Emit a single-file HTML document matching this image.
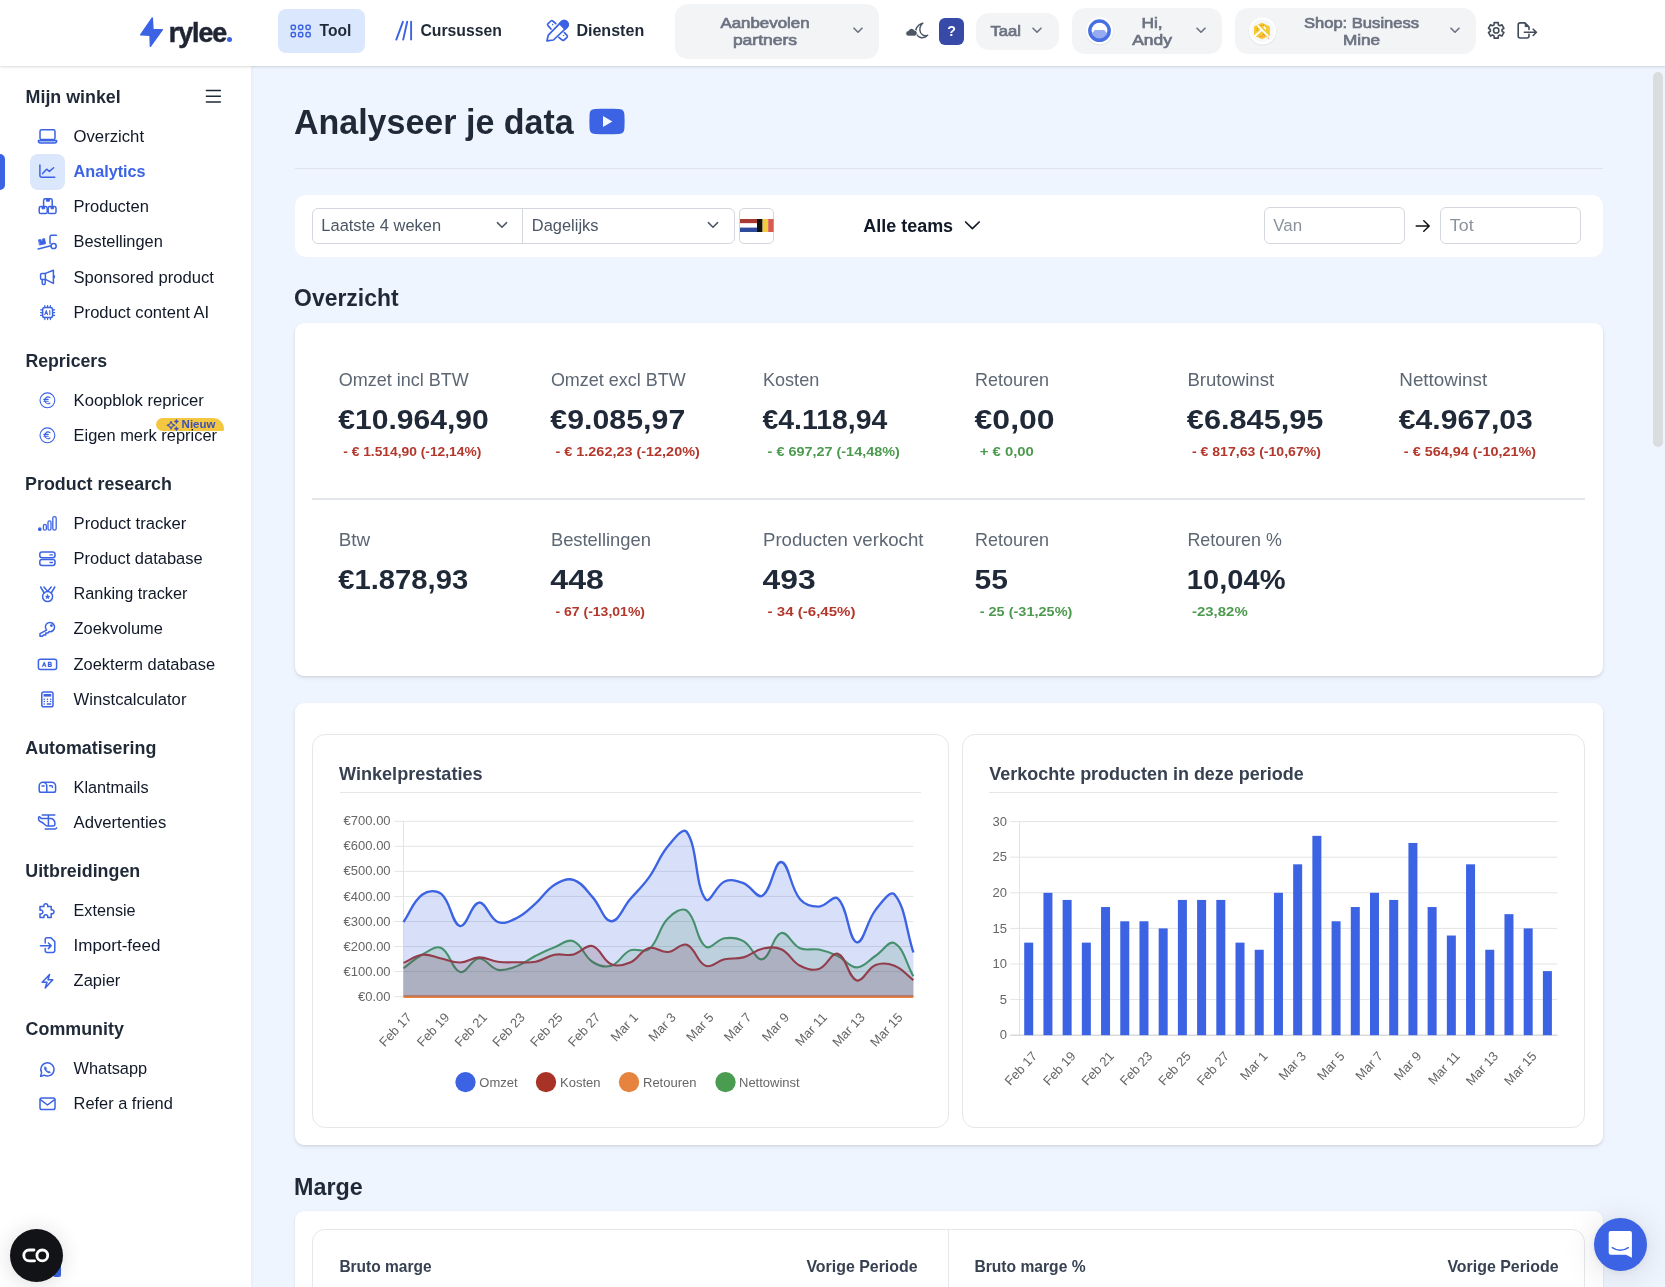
<!DOCTYPE html>
<html lang="nl"><head><meta charset="utf-8"><title>Rylee - Analytics</title>
<style>
*{box-sizing:border-box;margin:0;padding:0}
html,body{width:1665px;height:1287px;overflow:hidden;background:#eff5fe;font-family:"Liberation Sans",sans-serif}
#app{position:relative;width:1665px;height:1287px;overflow:hidden}
.t{position:absolute;white-space:pre;line-height:1;transform-origin:0 50%;font-family:"Liberation Sans",sans-serif}
.abs{position:absolute}
.box{position:absolute;background:#fff}
svg{position:absolute;overflow:visible}
.ic{fill:none;stroke:#3b63e3;stroke-width:1.5;stroke-linecap:round;stroke-linejoin:round}

</style></head>
<body>
<div id="app">
<!-- scrollbar -->
<div class="abs" style="left:1653px;top:72px;width:10px;height:375px;background:#dadde0;border-radius:5px"></div>
<!-- video icon -->
<svg style="left:585px;top:105px" width="44" height="34" viewBox="585 105 44 34"><path d="M595 109 C603 108.600 611 108.600 619 109 C622.600 109.200 624.200 110.800 624.400 114.400 C624.700 119 624.700 124 624.400 128.600 C624.200 132.200 622.600 133.800 619 134 C611 134.400 603 134.400 595 134 C591.400 133.800 589.800 132.200 589.600 128.600 C589.300 124 589.300 119 589.600 114.400 C589.800 110.800 591.400 109.200 595 109 Z" fill="#3b63e3"/><path d="M603 116 L612.400 121.500 L603 127.100 Z" fill="#f4f7ff"/></svg>
<!-- divider -->
<div class="abs" style="left:295px;top:168px;width:1308px;height:1px;background:#dfe4ec"></div>
<!-- filter bar -->
<div class="box" style="left:295px;top:195px;width:1308px;height:61.5px;border-radius:11px"></div>
<div class="abs" style="left:312px;top:207.5px;width:423px;height:36.5px;border:1px solid #d4d7dd;border-radius:6px;background:#fff"></div>
<div class="abs" style="left:522px;top:207.5px;width:1px;height:36.5px;background:#d4d7dd"></div>
<svg style="left:496px;top:221px" width="12" height="9" viewBox="0 0 12 9"><path d="M1.4 1.6 L6 6.2 L10.6 1.6" fill="none" stroke="#4b5563" stroke-width="1.5" stroke-linecap="round" stroke-linejoin="round"/></svg>
<svg style="left:707px;top:221px" width="12" height="9" viewBox="0 0 12 9"><path d="M1.4 1.6 L6 6.2 L10.6 1.6" fill="none" stroke="#4b5563" stroke-width="1.5" stroke-linecap="round" stroke-linejoin="round"/></svg>
<!-- flag button -->
<div class="abs" style="left:739px;top:208px;width:35px;height:35.5px;border:1px solid #d4d7dd;border-radius:5px;background:#fff"></div>
<svg style="left:740px;top:219px" width="34" height="13" viewBox="0 0 34 13">
<rect x="0" y="0" width="17" height="4.4" fill="#a93a32"/><rect x="0" y="4.4" width="17" height="4.3" fill="#fff"/><rect x="0" y="8.6" width="17" height="4.4" fill="#2d4a9b"/>
<rect x="17" y="0" width="5.6" height="13" fill="#111"/><rect x="22.6" y="0" width="5.6" height="13" fill="#f2cc3c"/><rect x="28.2" y="0" width="5.4" height="13" fill="#d95a4e"/></svg>
<!-- alle teams chevron -->
<svg style="left:964px;top:220px" width="17" height="11" viewBox="0 0 17 11"><path d="M1.6 2 L8.4 8.6 L15.2 2" fill="none" stroke="#111827" stroke-width="1.7" stroke-linecap="round" stroke-linejoin="round"/></svg>
<!-- date inputs -->
<div class="abs" style="left:1264px;top:207px;width:141px;height:37px;border:1px solid #d4d7dd;border-radius:6px;background:#fff"></div>
<div class="abs" style="left:1440px;top:207px;width:141px;height:37px;border:1px solid #d4d7dd;border-radius:6px;background:#fff"></div>
<svg style="left:1415px;top:219px" width="16" height="14" viewBox="0 0 16 14"><path d="M1.2 7 H14 M8.8 1.8 L14.2 7 L8.8 12.2" fill="none" stroke="#111" stroke-width="1.5" stroke-linecap="round" stroke-linejoin="round"/></svg>
<!-- overview card -->
<div class="box" style="left:295px;top:323px;width:1308px;height:353.3px;border-radius:9px;box-shadow:0 2px 4px rgba(0,0,0,.08),0 1px 2px rgba(0,0,0,.07)"></div>
<div class="abs" style="left:312px;top:498px;width:1273px;height:2px;background:#e2e5ea"></div>
<!-- charts card -->
<div class="box" style="left:295px;top:702.7px;width:1308px;height:442.6px;border-radius:9px;box-shadow:0 2px 4px rgba(0,0,0,.08),0 1px 2px rgba(0,0,0,.07)"></div>
<div class="abs" style="left:312px;top:734px;width:637px;height:393.5px;border:1px solid #e5e7eb;border-radius:13px;background:#fff"></div>
<div class="abs" style="left:962px;top:734px;width:623px;height:393.5px;border:1px solid #e5e7eb;border-radius:13px;background:#fff"></div>
<div class="abs" style="left:340px;top:791.5px;width:581px;height:1px;background:#e5e7eb"></div>
<div class="abs" style="left:989px;top:791.5px;width:569px;height:1px;background:#e5e7eb"></div>
<!-- marge card -->
<div class="box" style="left:295px;top:1211.4px;width:1308px;height:90px;border-radius:9px;box-shadow:0 1px 3px rgba(0,0,0,.10)"></div>
<div class="abs" style="left:312px;top:1229px;width:1273px;height:80px;border:1px solid #e5e7eb;border-radius:13px;background:#fff"></div>
<div class="abs" style="left:948px;top:1229px;width:1px;height:80px;background:#e5e7eb"></div>
<!-- chat button -->
<div class="abs" style="left:1594px;top:1218px;width:53px;height:53px;border-radius:50%;background:#3b63e3;box-shadow:0 4px 34px rgba(0,0,0,.13),0 1px 6px rgba(0,0,0,.06)"></div>
<svg style="left:1600px;top:1224px" width="40" height="40" viewBox="1600 1224 40 40"><path d="M1610.700 1231.100 H1629.900 a2 2 0 0 1 2 2 V1257.800 L1626 1254.800 H1610.700 a2 2 0 0 1 -2 -2 V1233.100 a2 2 0 0 1 2 -2 Z" fill="#fff"/><path d="M1612.300 1247.700 Q1620.200 1253 1628.300 1247.700" fill="none" stroke="#3b63e3" stroke-width="1.500" stroke-linecap="round"/></svg>

<svg style="left:0;top:0;will-change:transform" width="1665" height="1287" viewBox="0 0 1665 1287" font-family="Liberation Sans, sans-serif">
<path d="M394.3 996.60 H913.4" stroke="#e4e4e4" stroke-width="1" fill="none"/>
<text x="390.6" y="1000.70" font-size="13" fill="#666666" text-anchor="end">€0.00</text>
<path d="M394.3 971.56 H913.4" stroke="#e4e4e4" stroke-width="1" fill="none"/>
<text x="390.6" y="975.66" font-size="13" fill="#666666" text-anchor="end">€100.00</text>
<path d="M394.3 946.51 H913.4" stroke="#e4e4e4" stroke-width="1" fill="none"/>
<text x="390.6" y="950.61" font-size="13" fill="#666666" text-anchor="end">€200.00</text>
<path d="M394.3 921.47 H913.4" stroke="#e4e4e4" stroke-width="1" fill="none"/>
<text x="390.6" y="925.57" font-size="13" fill="#666666" text-anchor="end">€300.00</text>
<path d="M394.3 896.43 H913.4" stroke="#e4e4e4" stroke-width="1" fill="none"/>
<text x="390.6" y="900.53" font-size="13" fill="#666666" text-anchor="end">€400.00</text>
<path d="M394.3 871.39 H913.4" stroke="#e4e4e4" stroke-width="1" fill="none"/>
<text x="390.6" y="875.49" font-size="13" fill="#666666" text-anchor="end">€500.00</text>
<path d="M394.3 846.34 H913.4" stroke="#e4e4e4" stroke-width="1" fill="none"/>
<text x="390.6" y="850.44" font-size="13" fill="#666666" text-anchor="end">€600.00</text>
<path d="M394.3 821.30 H913.4" stroke="#e4e4e4" stroke-width="1" fill="none"/>
<text x="390.6" y="825.40" font-size="13" fill="#666666" text-anchor="end">€700.00</text>
<path d="M403.5 821.3 V996.6" stroke="#e4e4e4" stroke-width="1" fill="none"/>
<path d="M403.50 968.23 C411.05 962.72 414.24 958.82 422.39 954.45 C429.34 950.72 435.30 945.20 441.27 947.97 C450.41 952.20 451.57 969.57 460.16 971.96 C466.68 973.78 471.29 958.94 479.04 958.51 C486.40 958.09 489.86 968.23 497.93 969.86 C504.97 971.28 509.68 968.79 516.81 966.13 C524.79 963.15 528.00 959.62 535.70 955.75 C543.11 952.03 546.85 950.14 554.58 947.16 C561.96 944.30 567.20 938.73 573.47 941.16 C582.31 944.57 583.42 955.92 592.35 961.75 C598.53 965.78 604.56 967.81 611.24 965.80 C619.67 963.27 621.62 954.12 630.12 950.40 C636.72 947.51 643.82 953.65 649.01 949.26 C658.92 940.88 658.24 928.32 667.89 918.45 C673.35 912.88 681.73 906.90 686.78 910.67 C696.83 918.18 695.65 939.36 705.66 946.67 C710.76 950.39 716.70 939.38 724.55 938.24 C731.80 937.18 737.06 937.60 743.43 941.16 C752.17 946.03 755.56 960.77 762.32 959.32 C770.67 957.52 772.57 935.57 781.20 933.05 C787.68 931.16 791.60 944.57 800.09 948.29 C806.71 951.19 811.62 948.07 818.97 949.59 C826.73 951.19 830.68 952.68 837.86 956.07 C845.78 959.82 849.22 967.49 856.74 967.42 C864.33 967.36 868.16 960.56 875.63 955.75 C883.27 950.83 888.88 940.03 894.51 943.10 C903.99 948.27 905.85 963.05 913.40 976.34 L913.40 996.60 L403.50 996.60 Z" fill="#4a9c50" fill-opacity="0.2" stroke="none"/>
<path d="M403.50 968.23 C411.05 962.72 414.24 958.82 422.39 954.45 C429.34 950.72 435.30 945.20 441.27 947.97 C450.41 952.20 451.57 969.57 460.16 971.96 C466.68 973.78 471.29 958.94 479.04 958.51 C486.40 958.09 489.86 968.23 497.93 969.86 C504.97 971.28 509.68 968.79 516.81 966.13 C524.79 963.15 528.00 959.62 535.70 955.75 C543.11 952.03 546.85 950.14 554.58 947.16 C561.96 944.30 567.20 938.73 573.47 941.16 C582.31 944.57 583.42 955.92 592.35 961.75 C598.53 965.78 604.56 967.81 611.24 965.80 C619.67 963.27 621.62 954.12 630.12 950.40 C636.72 947.51 643.82 953.65 649.01 949.26 C658.92 940.88 658.24 928.32 667.89 918.45 C673.35 912.88 681.73 906.90 686.78 910.67 C696.83 918.18 695.65 939.36 705.66 946.67 C710.76 950.39 716.70 939.38 724.55 938.24 C731.80 937.18 737.06 937.60 743.43 941.16 C752.17 946.03 755.56 960.77 762.32 959.32 C770.67 957.52 772.57 935.57 781.20 933.05 C787.68 931.16 791.60 944.57 800.09 948.29 C806.71 951.19 811.62 948.07 818.97 949.59 C826.73 951.19 830.68 952.68 837.86 956.07 C845.78 959.82 849.22 967.49 856.74 967.42 C864.33 967.36 868.16 960.56 875.63 955.75 C883.27 950.83 888.88 940.03 894.51 943.10 C903.99 948.27 905.85 963.05 913.40 976.34" fill="none" stroke="#4a9c50" stroke-width="2.1" stroke-linejoin="round" stroke-linecap="butt"/>
<path d="M403.5 996.6 H913.4" stroke="#e6833f" stroke-width="2.8" fill="none"/>
<path d="M403.50 962.88 C411.05 959.64 414.58 955.68 422.39 954.78 C429.69 953.93 433.73 956.95 441.27 958.51 C448.84 960.07 452.65 962.79 460.16 962.56 C467.76 962.33 471.45 957.53 479.04 957.37 C486.56 957.21 490.27 960.76 497.93 961.75 C505.38 962.71 509.26 962.24 516.81 962.24 C524.37 962.24 528.38 963.19 535.70 961.75 C543.49 960.21 546.79 956.28 554.58 954.78 C561.89 953.36 566.26 956.12 573.47 954.45 C581.36 952.62 585.69 944.30 592.35 946.02 C600.80 948.19 602.47 960.34 611.24 964.18 C617.58 966.96 623.43 965.43 630.12 962.56 C638.54 958.94 640.66 950.30 649.01 947.97 C655.77 946.08 660.52 952.65 667.89 952.02 C675.62 951.36 680.48 942.42 686.78 944.72 C695.59 947.94 696.80 962.38 705.66 965.80 C711.91 968.22 716.80 961.05 724.55 959.32 C731.91 957.67 736.21 959.39 743.43 957.37 C751.32 955.17 754.41 950.47 762.32 948.78 C769.52 947.23 774.72 946.34 781.20 949.26 C789.82 953.15 791.52 961.31 800.09 965.80 C806.63 969.23 812.32 971.19 818.97 969.05 C827.43 966.32 831.41 951.70 837.86 953.64 C846.52 956.24 848.08 977.79 856.74 980.40 C863.19 982.33 867.12 968.28 875.63 964.99 C882.23 962.44 887.81 963.12 894.51 965.80 C902.91 969.16 905.85 974.36 913.40 980.07 L913.40 996.60 L403.50 996.60 Z" fill="#712327" fill-opacity="0.2" stroke="none"/>
<path d="M403.50 962.88 C411.05 959.64 414.58 955.68 422.39 954.78 C429.69 953.93 433.73 956.95 441.27 958.51 C448.84 960.07 452.65 962.79 460.16 962.56 C467.76 962.33 471.45 957.53 479.04 957.37 C486.56 957.21 490.27 960.76 497.93 961.75 C505.38 962.71 509.26 962.24 516.81 962.24 C524.37 962.24 528.38 963.19 535.70 961.75 C543.49 960.21 546.79 956.28 554.58 954.78 C561.89 953.36 566.26 956.12 573.47 954.45 C581.36 952.62 585.69 944.30 592.35 946.02 C600.80 948.19 602.47 960.34 611.24 964.18 C617.58 966.96 623.43 965.43 630.12 962.56 C638.54 958.94 640.66 950.30 649.01 947.97 C655.77 946.08 660.52 952.65 667.89 952.02 C675.62 951.36 680.48 942.42 686.78 944.72 C695.59 947.94 696.80 962.38 705.66 965.80 C711.91 968.22 716.80 961.05 724.55 959.32 C731.91 957.67 736.21 959.39 743.43 957.37 C751.32 955.17 754.41 950.47 762.32 948.78 C769.52 947.23 774.72 946.34 781.20 949.26 C789.82 953.15 791.52 961.31 800.09 965.80 C806.63 969.23 812.32 971.19 818.97 969.05 C827.43 966.32 831.41 951.70 837.86 953.64 C846.52 956.24 848.08 977.79 856.74 980.40 C863.19 982.33 867.12 968.28 875.63 964.99 C882.23 962.44 887.81 963.12 894.51 965.80 C902.91 969.16 905.85 974.36 913.40 980.07" fill="none" stroke="#a93226" stroke-width="2.1" stroke-linejoin="round" stroke-linecap="butt"/>
<path d="M403.50 922.02 C411.05 910.99 412.73 901.62 422.39 894.46 C427.84 890.40 436.19 889.71 441.27 893.97 C451.29 902.36 451.81 924.18 460.16 926.08 C466.91 927.61 471.09 903.42 479.04 902.56 C486.19 901.80 489.10 918.42 497.93 922.02 C504.21 924.58 510.05 921.30 516.81 917.97 C525.16 913.84 528.54 909.67 535.70 903.37 C543.65 896.37 545.87 890.15 554.58 884.73 C560.98 880.74 566.91 877.75 573.47 879.86 C582.02 882.61 585.52 889.41 592.35 896.89 C600.63 905.95 603.44 920.71 611.24 921.21 C618.55 921.68 622.57 908.08 630.12 899.32 C637.68 890.56 642.32 886.82 649.01 877.43 C657.43 865.61 658.74 857.30 667.89 846.30 C673.84 839.14 682.96 826.66 686.78 832.03 C698.06 847.87 694.65 884.90 705.66 899.32 C709.76 904.68 715.81 885.23 724.55 881.48 C730.92 878.75 736.56 880.51 743.43 883.10 C751.67 886.22 756.72 898.87 762.32 895.75 C771.83 890.44 773.95 861.34 781.20 862.02 C789.05 862.77 789.91 887.30 800.09 899.32 C805.02 905.14 811.48 906.78 818.97 906.62 C826.58 906.45 833.31 894.21 837.86 898.51 C848.42 908.48 848.29 939.75 856.74 942.29 C863.40 944.29 866.47 921.46 875.63 909.86 C881.58 902.33 890.20 889.59 894.51 894.46 C905.31 906.65 905.85 929.29 913.40 952.51 L913.40 996.60 L403.50 996.60 Z" fill="#3b63e3" fill-opacity="0.2" stroke="none"/>
<path d="M403.50 922.02 C411.05 910.99 412.73 901.62 422.39 894.46 C427.84 890.40 436.19 889.71 441.27 893.97 C451.29 902.36 451.81 924.18 460.16 926.08 C466.91 927.61 471.09 903.42 479.04 902.56 C486.19 901.80 489.10 918.42 497.93 922.02 C504.21 924.58 510.05 921.30 516.81 917.97 C525.16 913.84 528.54 909.67 535.70 903.37 C543.65 896.37 545.87 890.15 554.58 884.73 C560.98 880.74 566.91 877.75 573.47 879.86 C582.02 882.61 585.52 889.41 592.35 896.89 C600.63 905.95 603.44 920.71 611.24 921.21 C618.55 921.68 622.57 908.08 630.12 899.32 C637.68 890.56 642.32 886.82 649.01 877.43 C657.43 865.61 658.74 857.30 667.89 846.30 C673.84 839.14 682.96 826.66 686.78 832.03 C698.06 847.87 694.65 884.90 705.66 899.32 C709.76 904.68 715.81 885.23 724.55 881.48 C730.92 878.75 736.56 880.51 743.43 883.10 C751.67 886.22 756.72 898.87 762.32 895.75 C771.83 890.44 773.95 861.34 781.20 862.02 C789.05 862.77 789.91 887.30 800.09 899.32 C805.02 905.14 811.48 906.78 818.97 906.62 C826.58 906.45 833.31 894.21 837.86 898.51 C848.42 908.48 848.29 939.75 856.74 942.29 C863.40 944.29 866.47 921.46 875.63 909.86 C881.58 902.33 890.20 889.59 894.51 894.46 C905.31 906.65 905.85 929.29 913.40 952.51" fill="none" stroke="#3b63e3" stroke-width="2.35" stroke-linejoin="round" stroke-linecap="butt"/>
<text transform="translate(404.00 1010.20) rotate(-47)" x="0" y="11.4" font-size="13" fill="#666666" text-anchor="end">Feb 17</text>
<text transform="translate(441.77 1010.20) rotate(-47)" x="0" y="11.4" font-size="13" fill="#666666" text-anchor="end">Feb 19</text>
<text transform="translate(479.54 1010.20) rotate(-47)" x="0" y="11.4" font-size="13" fill="#666666" text-anchor="end">Feb 21</text>
<text transform="translate(517.31 1010.20) rotate(-47)" x="0" y="11.4" font-size="13" fill="#666666" text-anchor="end">Feb 23</text>
<text transform="translate(555.08 1010.20) rotate(-47)" x="0" y="11.4" font-size="13" fill="#666666" text-anchor="end">Feb 25</text>
<text transform="translate(592.85 1010.20) rotate(-47)" x="0" y="11.4" font-size="13" fill="#666666" text-anchor="end">Feb 27</text>
<text transform="translate(630.62 1010.20) rotate(-47)" x="0" y="11.4" font-size="13" fill="#666666" text-anchor="end">Mar 1</text>
<text transform="translate(668.39 1010.20) rotate(-47)" x="0" y="11.4" font-size="13" fill="#666666" text-anchor="end">Mar 3</text>
<text transform="translate(706.16 1010.20) rotate(-47)" x="0" y="11.4" font-size="13" fill="#666666" text-anchor="end">Mar 5</text>
<text transform="translate(743.93 1010.20) rotate(-47)" x="0" y="11.4" font-size="13" fill="#666666" text-anchor="end">Mar 7</text>
<text transform="translate(781.70 1010.20) rotate(-47)" x="0" y="11.4" font-size="13" fill="#666666" text-anchor="end">Mar 9</text>
<text transform="translate(819.47 1010.20) rotate(-47)" x="0" y="11.4" font-size="13" fill="#666666" text-anchor="end">Mar 11</text>
<text transform="translate(857.24 1010.20) rotate(-47)" x="0" y="11.4" font-size="13" fill="#666666" text-anchor="end">Mar 13</text>
<text transform="translate(895.01 1010.20) rotate(-47)" x="0" y="11.4" font-size="13" fill="#666666" text-anchor="end">Mar 15</text>
<circle cx="465.5" cy="1082.1" r="10.2" fill="#3b63e3"/>
<text x="479.3" y="1086.7" font-size="13" fill="#666666">Omzet</text>
<circle cx="546" cy="1082.1" r="10.2" fill="#a93226"/>
<text x="560" y="1086.7" font-size="13" fill="#666666">Kosten</text>
<circle cx="629" cy="1082.1" r="10.2" fill="#e6833f"/>
<text x="643" y="1086.7" font-size="13" fill="#666666">Retouren</text>
<circle cx="725.5" cy="1082.1" r="10.2" fill="#4a9c50"/>
<text x="739" y="1086.7" font-size="13" fill="#666666">Nettowinst</text>
<path d="M1010.2 1035.20 H1557.4" stroke="#e4e4e4" stroke-width="1" fill="none"/>
<text x="1007" y="1039.30" font-size="13" fill="#666666" text-anchor="end">0</text>
<path d="M1010.2 999.60 H1557.4" stroke="#e4e4e4" stroke-width="1" fill="none"/>
<text x="1007" y="1003.70" font-size="13" fill="#666666" text-anchor="end">5</text>
<path d="M1010.2 964.00 H1557.4" stroke="#e4e4e4" stroke-width="1" fill="none"/>
<text x="1007" y="968.10" font-size="13" fill="#666666" text-anchor="end">10</text>
<path d="M1010.2 928.40 H1557.4" stroke="#e4e4e4" stroke-width="1" fill="none"/>
<text x="1007" y="932.50" font-size="13" fill="#666666" text-anchor="end">15</text>
<path d="M1010.2 892.80 H1557.4" stroke="#e4e4e4" stroke-width="1" fill="none"/>
<text x="1007" y="896.90" font-size="13" fill="#666666" text-anchor="end">20</text>
<path d="M1010.2 857.20 H1557.4" stroke="#e4e4e4" stroke-width="1" fill="none"/>
<text x="1007" y="861.30" font-size="13" fill="#666666" text-anchor="end">25</text>
<path d="M1010.2 821.60 H1557.4" stroke="#e4e4e4" stroke-width="1" fill="none"/>
<text x="1007" y="825.70" font-size="13" fill="#666666" text-anchor="end">30</text>
<path d="M1019.5 821.6 V1035.2" stroke="#e4e4e4" stroke-width="1" fill="none"/>
<path d="M1010.2 1035.20 H1557.4" stroke="#d2d2d2" stroke-width="1" fill="none"/>
<rect x="1024.21" y="942.64" width="9.0" height="92.56" fill="#3b63e3"/>
<rect x="1043.42" y="892.80" width="9.0" height="142.40" fill="#3b63e3"/>
<rect x="1062.63" y="899.92" width="9.0" height="135.28" fill="#3b63e3"/>
<rect x="1081.84" y="942.64" width="9.0" height="92.56" fill="#3b63e3"/>
<rect x="1101.05" y="907.04" width="9.0" height="128.16" fill="#3b63e3"/>
<rect x="1120.26" y="921.28" width="9.0" height="113.92" fill="#3b63e3"/>
<rect x="1139.47" y="921.28" width="9.0" height="113.92" fill="#3b63e3"/>
<rect x="1158.68" y="928.40" width="9.0" height="106.80" fill="#3b63e3"/>
<rect x="1177.89" y="899.92" width="9.0" height="135.28" fill="#3b63e3"/>
<rect x="1197.10" y="899.92" width="9.0" height="135.28" fill="#3b63e3"/>
<rect x="1216.31" y="899.92" width="9.0" height="135.28" fill="#3b63e3"/>
<rect x="1235.52" y="942.64" width="9.0" height="92.56" fill="#3b63e3"/>
<rect x="1254.73" y="949.76" width="9.0" height="85.44" fill="#3b63e3"/>
<rect x="1273.94" y="892.80" width="9.0" height="142.40" fill="#3b63e3"/>
<rect x="1293.16" y="864.32" width="9.0" height="170.88" fill="#3b63e3"/>
<rect x="1312.37" y="835.84" width="9.0" height="199.36" fill="#3b63e3"/>
<rect x="1331.58" y="921.28" width="9.0" height="113.92" fill="#3b63e3"/>
<rect x="1350.79" y="907.04" width="9.0" height="128.16" fill="#3b63e3"/>
<rect x="1370.00" y="892.80" width="9.0" height="142.40" fill="#3b63e3"/>
<rect x="1389.21" y="899.92" width="9.0" height="135.28" fill="#3b63e3"/>
<rect x="1408.42" y="842.96" width="9.0" height="192.24" fill="#3b63e3"/>
<rect x="1427.63" y="907.04" width="9.0" height="128.16" fill="#3b63e3"/>
<rect x="1446.84" y="935.52" width="9.0" height="99.68" fill="#3b63e3"/>
<rect x="1466.05" y="864.32" width="9.0" height="170.88" fill="#3b63e3"/>
<rect x="1485.26" y="949.76" width="9.0" height="85.44" fill="#3b63e3"/>
<rect x="1504.47" y="914.16" width="9.0" height="121.04" fill="#3b63e3"/>
<rect x="1523.68" y="928.40" width="9.0" height="106.80" fill="#3b63e3"/>
<rect x="1542.89" y="971.12" width="9.0" height="64.08" fill="#3b63e3"/>
<text transform="translate(1029.61 1048.90) rotate(-47)" x="0" y="11.4" font-size="13" fill="#666666" text-anchor="end">Feb 17</text>
<text transform="translate(1068.03 1048.90) rotate(-47)" x="0" y="11.4" font-size="13" fill="#666666" text-anchor="end">Feb 19</text>
<text transform="translate(1106.45 1048.90) rotate(-47)" x="0" y="11.4" font-size="13" fill="#666666" text-anchor="end">Feb 21</text>
<text transform="translate(1144.87 1048.90) rotate(-47)" x="0" y="11.4" font-size="13" fill="#666666" text-anchor="end">Feb 23</text>
<text transform="translate(1183.29 1048.90) rotate(-47)" x="0" y="11.4" font-size="13" fill="#666666" text-anchor="end">Feb 25</text>
<text transform="translate(1221.71 1048.90) rotate(-47)" x="0" y="11.4" font-size="13" fill="#666666" text-anchor="end">Feb 27</text>
<text transform="translate(1260.13 1048.90) rotate(-47)" x="0" y="11.4" font-size="13" fill="#666666" text-anchor="end">Mar 1</text>
<text transform="translate(1298.56 1048.90) rotate(-47)" x="0" y="11.4" font-size="13" fill="#666666" text-anchor="end">Mar 3</text>
<text transform="translate(1336.98 1048.90) rotate(-47)" x="0" y="11.4" font-size="13" fill="#666666" text-anchor="end">Mar 5</text>
<text transform="translate(1375.40 1048.90) rotate(-47)" x="0" y="11.4" font-size="13" fill="#666666" text-anchor="end">Mar 7</text>
<text transform="translate(1413.82 1048.90) rotate(-47)" x="0" y="11.4" font-size="13" fill="#666666" text-anchor="end">Mar 9</text>
<text transform="translate(1452.24 1048.90) rotate(-47)" x="0" y="11.4" font-size="13" fill="#666666" text-anchor="end">Mar 11</text>
<text transform="translate(1490.66 1048.90) rotate(-47)" x="0" y="11.4" font-size="13" fill="#666666" text-anchor="end">Mar 13</text>
<text transform="translate(1529.08 1048.90) rotate(-47)" x="0" y="11.4" font-size="13" fill="#666666" text-anchor="end">Mar 15</text>
</svg>
<div class="abs" id="side" style="left:0;top:66px;width:251px;height:1221px;background:#fff;box-shadow:1px 0 3px rgba(30,60,120,.06)"></div>
<!-- hamburger -->
<svg style="left:205px;top:89px" width="17" height="14" viewBox="0 0 17 14"><path d="M1.4 1.4H15.4M1.4 7.2H15.4M1.4 12.9H15.4" stroke="#1f2937" stroke-width="1.5" stroke-linecap="round" fill="none"/></svg>
<!-- active -->
<div class="abs" style="left:0;top:154px;width:5px;height:36px;background:#3b63e3;border-radius:0 5px 5px 0"></div>
<div class="abs" style="left:30px;top:154px;width:35px;height:36px;border-radius:8px;background:#dbe7fd"></div>
<svg style="left:0;top:0" width="251" height="1287" viewBox="0 0 251 1287"><g class="ic">
<!-- laptop -->
<rect x="40" y="129.8" width="15" height="9.8" rx="1.6"/>
<path d="M38.4 140.4 H56.6 V141 a2 2 0 0 1 -2 2 H40.4 a2 2 0 0 1 -2 -2 Z" fill="#c9d6fa"/>
<!-- analytics -->
<path d="M39.9 165 V175.2 a2 2 0 0 0 2 2 H54.8"/>
<path d="M42.6 173.6 L46.6 169.2 L49.4 171.4 L53.6 167.8"/>
<!-- producten -->
<path d="M43.6 205.6 V200.4 a1.6 1.6 0 0 1 1.6 -1.6 H50.6 a1.6 1.6 0 0 1 1.6 1.6 V205.6"/>
<path d="M46.4 199 V201.2 H49.4 V199" fill="#3b63e3" stroke-width="1"/>
<rect x="39.2" y="206.6" width="8" height="7" rx="1.6"/>
<rect x="48.2" y="206.6" width="7.8" height="7" rx="1.6"/>
<path d="M42 206.8 V208.8 H44.6 V206.8" fill="#3b63e3" stroke-width="1"/>
<path d="M51 206.8 V208.8 H53.4 V206.8" fill="#3b63e3" stroke-width="1"/>
<!-- bestellingen -->
<path d="M56.400 235.200 H51.600 a1.600 1.600 0 0 0 -1.600 1.600 V243.600"/>
<circle cx="53.600" cy="246" r="2.600"/>
<path d="M38.200 249 L50.800 245.800"/>
<path d="M38.800 239.800 L40.800 239.400 L41.200 241 L42.800 240.600 L42.400 239 L44.600 238.600 L45.600 243.800 L39.800 245 Z" fill="#3b63e3" stroke-width=".8"/>
<!-- megaphone -->
<path d="M40.600 274.600 a1.200 1.200 0 0 1 1.200 -1.200 H45.400 L53.400 270.200 V283.400 L45.400 279.400 H41.800 a1.200 1.200 0 0 1 -1.200 -1.200 Z"/>
<path d="M45.400 273.400 V279.400"/>
<path d="M42.200 279.600 V283.200 a1.200 1.200 0 0 0 1.200 1.200 H44 a1.200 1.200 0 0 0 1.200 -1.200 V279.600"/>
<path d="M53.600 275.400 a1.600 1.600 0 0 1 0 2.800" stroke-width="1.300"/>
<!-- AI chip -->
<rect x="42.600" y="307.600" width="10" height="10" rx="2.200"/>
<path d="M44.800 305.600 V307.600 M47.600 305.600 V307.600 M50.400 305.600 V307.600 M44.800 317.600 V319.600 M47.600 317.600 V319.600 M50.400 317.600 V319.600 M40.600 309.800 H42.600 M40.600 312.600 H42.600 M40.600 315.400 H42.600 M52.600 309.800 H54.600 M52.600 312.600 H54.600 M52.600 315.400 H54.600" stroke-width="1.200"/>
<path d="M44.800 314.600 L46.200 310.600 L47.600 314.600 M45.300 313.400 H47.100 M49.800 310.600 V314.600" stroke-width="1.100"/>
<!-- euro circles -->
<circle cx="47.4" cy="400.3" r="7.4" stroke-width="1.1"/>
<path d="M50 397.6 a3.3 3.3 0 1 0 0 5.4 M43.8 399.4 H48.2 M43.8 401.2 H48.2" stroke-width="1.1"/>
<circle cx="47.4" cy="435.3" r="7.4" stroke-width="1.1"/>
<path d="M50 432.6 a3.3 3.3 0 1 0 0 5.4 M43.8 434.4 H48.2 M43.8 436.2 H48.2" stroke-width="1.1"/>
<!-- product tracker -->
<circle cx="39.8" cy="529.2" r="1.1" fill="#3b63e3"/>
<rect x="43.4" y="524.4" width="3" height="5.8" rx="1.5" stroke-width="1.3"/>
<rect x="48" y="520.8" width="3" height="9.4" rx="1.5" stroke-width="1.3"/>
<rect x="52.8" y="516.6" width="3.4" height="13.6" rx="1.7" stroke-width="1.3"/>
<!-- product database -->
<rect x="39.8" y="552" width="15.2" height="5.8" rx="2.2"/>
<rect x="39.8" y="559.6" width="15.2" height="5.8" rx="2.2"/>
<path d="M50 554.9 H52.4 M50 562.5 H52.4" stroke-width="1.3"/>
<!-- ranking -->
<circle cx="47.6" cy="596.6" r="5"/>
<path d="M40.6 587 L44.2 593 M54.8 587 L51.2 593 M44 587 L47.6 591.4 L51.2 587" />
<path d="M47.6 594.6 L48.3 596 L49.8 596.2 L48.7 597.2 L49 598.7 L47.6 598 L46.2 598.7 L46.5 597.2 L45.4 596.2 L46.9 596 Z" fill="#3b63e3" stroke-width=".5"/>
<!-- key -->
<path d="M46.6 630.2 a4.6 4.6 0 1 1 2.6 1.4 L48 633 H45.8 V635 H43.4 L42.6 636.2 H40 V633.6 Z"/>
<circle cx="51.4" cy="625.6" r=".7" fill="#3b63e3"/>
<!-- AB -->
<rect x="38.4" y="659.2" width="18.2" height="10.4" rx="2"/>
<path d="M42.6 666.4 L44.2 662.4 L45.8 666.4 M43.2 665.2 H45.2 M48.4 662.4 V666.4 H50.4 a1 1 0 0 0 0 -2 H48.4 M50.2 664.4 a1 1 0 0 0 0 -2 H48.4" stroke-width="1.15"/>
<!-- calculator -->
<rect x="41.8" y="692" width="11.2" height="14.8" rx="1.8"/>
<rect x="43.6" y="694" width="7.6" height="2.6" fill="#3b63e3" stroke="none"/>
<path d="M44.2 699.2h.1M47.4 699.2h.1M50.6 699.2h.1M44.2 701.6h.1M47.4 701.6h.1M50.6 701.6h.1M44.2 704h.1M47.4 704h3.2" stroke-width="1.5"/>
<!-- mailbox -->
<path d="M43 782.200 H51.800 a3.800 3.800 0 0 1 3.800 3.800 V790.400 a1.800 1.800 0 0 1 -1.800 1.800 H41 a1.800 1.800 0 0 1 -1.800 -1.800 V786 a3.800 3.800 0 0 1 3.800 -3.800 a3.800 3.800 0 0 1 3.800 3.800 V792.200"/>
<path d="M42 786 H44.200 M49.600 785.800 H51.400 a1 1 0 0 1 1 1 V787.400" stroke-width="1.400"/>
<!-- advertenties (helicopter) -->
<path d="M42.200 815.100 H54.800 M48.400 815.100 V825.600"/>
<path d="M38.600 817.200 L39.600 816.800 L41.400 818.600 H50.600 a4.300 4.300 0 0 1 4.300 4.300 V824 a2 2 0 0 1 -2 2 H47.400 c-2.200 0 -3.200 -2.800 -5.600 -3.800 c-2 -0.800 -3.200 -1.400 -3.200 -3 Z"/>
<path d="M45.200 829.100 H54.200 a2.600 2.600 0 0 0 2.400 -1.300"/>
<!-- puzzle -->
<path d="M40 906.6 H44 a2 2 0 1 1 3.6 0 H51.2 V910 a2 2 0 1 1 0 3.6 V917.6 H47.6 a2 2 0 1 0 -3.6 0 H40 V913.8 a2 2 0 1 0 0 -3.6 Z"/>
<!-- import -->
<path d="M45.2 943 V939.6 a1.8 1.8 0 0 1 1.8 -1.8 H51 L54.8 941.6 V950.6 a1.8 1.8 0 0 1 -1.8 1.8 H47 a1.8 1.8 0 0 1 -1.8 -1.8 V948.6"/>
<path d="M40.4 945.8 H51 M48.4 943 L51.2 945.8 L48.4 948.6"/>
<!-- zapier bolt -->
<path d="M49.6 974.4 L42.2 982.2 H47 L45.2 988 L52.8 979.8 H48 Z"/>
<!-- whatsapp -->
<path d="M40.6 1076.2 L41.6 1072.6 a6.6 6.6 0 1 1 2.6 2.6 Z"/>
<path d="M44.8 1066.6 c-.6 .6 -.8 1.6 -.2 2.8 c.8 1.6 2 2.8 3.600 3.400 c1 .4 1.800 .2 2.400 -.400 l-1.400 -1.400 l-1 .6 c-.8 -.4 -1.600 -1.200 -2 -2 l.6 -1 Z" fill="#3b63e3" stroke-width=".4"/>
<!-- mail -->
<rect x="40" y="1098" width="15" height="11.6" rx="1.8"/>
<path d="M40.4 1099.6 L47.5 1105 L54.6 1099.6"/>
</g></svg>

<!-- Nieuw badge -->
<div class="abs" style="left:156px;top:418px;width:68px;height:13px;background:#f3c73f;border-radius:7px 12px 2px 7px"></div>
<svg style="left:166px;top:418.5px" width="13" height="12" viewBox="0 0 13 12"><g fill="none" stroke="#3f51b5" stroke-width="1.1" stroke-linejoin="round"><path d="M5 2.4 L6.2 5 L8.8 6.2 L6.2 7.4 L5 10 L3.8 7.4 L1.2 6.2 L3.8 5 Z"/><path d="M10.4 .8 L10.9 2 L12.1 2.5 L10.9 3 L10.4 4.2 L9.9 3 L8.7 2.5 L9.9 2 Z" fill="#3f51b5"/><path d="M10.4 8 L10.9 9.2 L12.1 9.7 L10.9 10.2 L10.4 11.4 L9.9 10.2 L8.7 9.7 L9.9 9.2 Z" fill="#3f51b5"/></g></svg>
<!-- bottom-left button -->
<div class="abs" style="left:53px;top:1264px;width:8px;height:13px;background:#3b63e3;border-radius:2px"></div>
<div class="abs" style="left:10px;top:1229px;width:53px;height:53px;border-radius:50%;background:#121316;box-shadow:0 2px 22px rgba(0,0,0,.14)"></div>
<svg style="left:22px;top:1248px" width="30" height="15" viewBox="0 0 30 15"><g fill="none" stroke="#fff" stroke-width="2.8" stroke-linecap="round"><path d="M12 2 H7.200 a5.400 5.400 0 0 0 0 10.800 H12.600"/><circle cx="20.300" cy="7.400" r="5.400"/></g></svg>

<div class="abs" id="hdr" style="left:0;top:0;width:1665px;height:66px;background:#fff;box-shadow:0 1px 3px rgba(0,0,0,.10),0 1px 2px rgba(0,0,0,.06)"></div>
<!-- logo -->
<svg style="left:130px;top:8px;will-change:transform" width="120" height="50" viewBox="130 8 120 50">
  <path d="M152.300 18 L140.600 34.800 L150 35.200 L150.400 46.300 L162.400 29.700 L153 29.400 Z" fill="#3b63e3" stroke="#3b63e3" stroke-width="1.400" stroke-linejoin="round"/>
  <text x="168.800" y="41.500" font-family="Liberation Sans, sans-serif" font-weight="700" font-size="26.800" fill="#1f2433" stroke="#1f2433" stroke-width=".5" textLength="58.400" lengthAdjust="spacing">rylee</text>
  <circle cx="229.500" cy="39.600" r="2.500" fill="#3b63e3"/>
</svg>
<!-- Tool button -->
<div class="abs" style="left:278px;top:9px;width:87px;height:44px;border-radius:8px;background:#dbe7fd"></div>
<svg style="left:290px;top:24px" width="22" height="15" viewBox="0 0 22 15"><g fill="none" stroke="#3b63e3" stroke-width="1.5">
<rect x="1.2" y="1.2" width="4.2" height="4.2" rx="1.3"/><rect x="8.6" y="1.2" width="4.2" height="4.2" rx="1.3"/><rect x="16" y="1.2" width="4.2" height="4.2" rx="1.3"/>
<rect x="1.2" y="8.6" width="4.2" height="4.2" rx="1.3"/><rect x="8.6" y="8.6" width="4.2" height="4.2" rx="1.3"/><rect x="16" y="8.6" width="4.2" height="4.2" rx="1.3"/></g></svg>
<!-- Cursussen icon -->
<svg style="left:390px;top:15px" width="30" height="32" viewBox="390 15 30 32"><g fill="none" stroke="#3b63e3" stroke-width="1.9" stroke-linecap="round"><path d="M396.300 39.600 L402.900 21.800"/><path d="M403.200 39.600 L407.200 21.800"/><path d="M411.100 39.600 L411.100 21.800"/></g></svg>
<!-- Diensten icon -->
<svg style="left:540px;top:10px" width="40" height="40" viewBox="540 10 40 40"><g fill="none" stroke="#3b63e3" stroke-width="1.7" stroke-linecap="round" stroke-linejoin="round">
<path d="M546.9 40.9 L548.3 35.2 L561.6 21.6 a3.5 3.5 0 0 1 5 0 l0.5 .5 a3.5 3.5 0 0 1 0 5 L553.4 40 Z"/>
<path d="M559.6 23.6 L561.6 21.6 a3.5 3.5 0 0 1 5 0 l0.5 .5 a3.5 3.5 0 0 1 0 5 L565 29.2 Z" fill="#3b63e3"/>
<path d="M555.8 23.6 L552.8 21 a1.4 1.4 0 0 0 -1.9 0 L548 23.7 a1.4 1.4 0 0 0 0 1.9 L551 29"/>
<path d="M564.4 32.6 L567 35.4 a1.4 1.4 0 0 1 0 1.900 L564 40 a1.4 1.4 0 0 1 -1.9 0 L558.8 37.400"/>
<path d="M552.6 24.5 h.1 M563.5 35.5 h.1" stroke-width="1.3"/>
</g></svg>
<!-- Aanbevolen partners -->
<div class="abs" style="left:675px;top:4px;width:204px;height:54.5px;border-radius:13px;background:#f3f4f6"></div>
<svg style="left:852px;top:26px" width="12" height="9" viewBox="0 0 12 9"><path d="M2 2.2 L6 6.2 L10 2.2" fill="none" stroke="#6b7280" stroke-width="1.6" stroke-linecap="round" stroke-linejoin="round"/></svg>
<!-- moon/cloud -->
<svg style="left:900px;top:15px" width="34" height="30" viewBox="900 15 34 30">
<path d="M922.9 23.1 C917 24.6 914.4 30 916.4 34 C918.6 38.4 924.2 39 927.7 35.3 C923.8 36.6 920.4 34.4 919.9 30.400 C919.6 27.400 921 24.600 922.900 23.100 Z" fill="none" stroke="#4b5563" stroke-width="1.4" stroke-linejoin="round"/>
<path d="M908.600 36.100 a2.700 2.700 0 0 1 -0.200 -5.400 a3.300 3.300 0 0 1 6.100 -0.500 a3 3 0 0 1 0.500 5.900 Z" fill="#4b5563" stroke="#fff" stroke-width="0.8"/></svg>
<!-- ? -->
<div class="abs" style="left:939px;top:18px;width:25.2px;height:27px;border-radius:6px;background:#374aa8"></div>
<!-- Taal -->
<div class="abs" style="left:976px;top:13px;width:82.5px;height:36.5px;border-radius:13px;background:#f3f4f6"></div>
<svg style="left:1031px;top:26px" width="12" height="9" viewBox="0 0 12 9"><path d="M2 2.2 L6 6.2 L10 2.2" fill="none" stroke="#6b7280" stroke-width="1.6" stroke-linecap="round" stroke-linejoin="round"/></svg>
<!-- Hi Andy -->
<div class="abs" style="left:1072px;top:8px;width:150px;height:45.5px;border-radius:13px;background:#f3f4f6"></div>
<svg style="left:1080px;top:10px" width="40" height="42" viewBox="1080 10 40 42">
<circle cx="1099.5" cy="31.4" r="14.2" fill="rgba(0,0,0,.05)"/>
<circle cx="1099.5" cy="30.7" r="13.6" fill="#fff"/>
<path d="M1093.600 31.800 a1.800 1.800 0 0 1 1.800 -1.900 h8.200 a1.800 1.800 0 0 1 1.800 1.900 a7 7 0 0 1 -11.800 5.600 z" fill="#96abf0"/>
<path d="M1091.8 33 a7.800 7.800 0 0 0 15.400 0 l-1.800 -1.200 a7 7 0 0 1 -11.800 0 z" fill="#96abf0"/>
<circle cx="1099.5" cy="30.700" r="9.650" fill="none" stroke="#4870e5" stroke-width="3.500"/>
</svg>
<svg style="left:1195px;top:26px" width="12" height="9" viewBox="0 0 12 9"><path d="M2 2.2 L6 6.2 L10 2.2" fill="none" stroke="#6b7280" stroke-width="1.6" stroke-linecap="round" stroke-linejoin="round"/></svg>
<!-- Shop -->
<div class="abs" style="left:1235px;top:8px;width:241px;height:45.5px;border-radius:13px;background:#f3f4f6"></div>
<svg style="left:1242px;top:10px" width="40" height="42" viewBox="1242 10 40 42">
<circle cx="1262.5" cy="31.500" r="14.200" fill="rgba(0,0,0,.05)"/>
<circle cx="1262.5" cy="30.800" r="13.600" fill="#fff"/>
<circle cx="1262.5" cy="30.800" r="11.200" fill="#f6f7f9"/>
<path d="M1262 22.800 L1269.800 26.600 L1269.800 35.400 L1262 39.200 L1254 35.400 L1254 26.400 Z" fill="#f5c931"/>
<path d="M1258 25.800 L1267.600 35.600 M1254.800 36 L1261.400 30.200" stroke="#fff" stroke-width="1.900" fill="none" stroke-linecap="round"/>
<path d="M1264.200 27 l1.200 1.800" stroke="#fff" stroke-width="1.600" stroke-linecap="round"/>
<g fill="#e8703a"><rect x="1260.800" y="24.800" width="1" height="1"/><rect x="1262.800" y="24.800" width="1" height="1"/><rect x="1256.800" y="27.800" width="1" height="1"/><rect x="1256.800" y="29.800" width="1" height="1"/><rect x="1259.800" y="35.800" width="1" height="1"/><rect x="1261.800" y="35.800" width="1" height="1"/><rect x="1262.800" y="33.800" width="1" height="1"/><rect x="1263.800" y="34.800" width="1" height="1"/><rect x="1267.800" y="37.600" width="1" height="1"/></g>
</svg>
<svg style="left:1449px;top:26px" width="12" height="9" viewBox="0 0 12 9"><path d="M2 2.2 L6 6.2 L10 2.2" fill="none" stroke="#6b7280" stroke-width="1.6" stroke-linecap="round" stroke-linejoin="round"/></svg>
<!-- gear -->
<svg style="left:1480px;top:10px" width="65" height="40" viewBox="1480 10 65 40"><g fill="none" stroke="#434b59" stroke-width="1.6" stroke-linecap="round" stroke-linejoin="round">
<path d="M1498.31 24.89 L1498.27 22.67 L1494.13 22.67 L1494.09 24.89 L1492.49 25.81 L1490.54 24.74 L1488.47 28.33 L1490.37 29.48 L1490.37 31.32 L1488.47 32.47 L1490.54 36.06 L1492.49 34.99 L1494.09 35.91 L1494.13 38.13 L1498.27 38.13 L1498.31 35.91 L1499.91 34.99 L1501.86 36.06 L1503.93 32.47 L1502.03 31.32 L1502.03 29.48 L1503.93 28.33 L1501.86 24.74 L1499.91 25.81 Z"/>
<circle cx="1496.2" cy="30.4" r="2.65"/>
<path d="M1529 29.400 V27 L1524.800 22.900 H1520.200 a2 2 0 0 0 -2 2 V36 a2 2 0 0 0 2 2 H1527 a2 2 0 0 0 2 -2 V34.400"/>
<path d="M1525.200 23.300 V26.600 H1528.600 Z" fill="#414957" stroke-width="1"/>
<path d="M1524.400 32.300 H1536.200 M1533.200 29.200 L1536.400 32.300 L1533.200 35.500"/>
</g></svg>

<div id="texts">
<svg style="left:0;top:0;will-change:transform" width="1665" height="1287" viewBox="0 0 1665 1287" font-family="Liberation Sans, sans-serif">
<text x="319.60" y="36" font-size="15.75" fill="#1f2937" font-weight="700" textLength="31.80" lengthAdjust="spacingAndGlyphs">Tool</text>
<text x="420.40" y="36" font-size="15.75" fill="#1f2937" font-weight="700" textLength="81.60" lengthAdjust="spacingAndGlyphs">Cursussen</text>
<text x="576.40" y="36" font-size="15.75" fill="#1f2937" font-weight="700" textLength="67.80" lengthAdjust="spacingAndGlyphs">Diensten</text>
<text x="765.00" y="28" font-size="15.45" fill="#6b7280" stroke="#6b7280" stroke-width="0.7" text-anchor="middle" textLength="89.20" lengthAdjust="spacingAndGlyphs">Aanbevolen</text>
<text x="765.00" y="45" font-size="15.45" fill="#6b7280" stroke="#6b7280" stroke-width="0.7" text-anchor="middle" textLength="64.20" lengthAdjust="spacingAndGlyphs">partners</text>
<text x="990.40" y="36" font-size="15.45" fill="#6b7280" stroke="#6b7280" stroke-width="0.7" textLength="30.60" lengthAdjust="spacingAndGlyphs">Taal</text>
<text x="1152.00" y="28" font-size="15.45" fill="#6b7280" stroke="#6b7280" stroke-width="0.7" text-anchor="middle" textLength="21.20" lengthAdjust="spacingAndGlyphs">Hi,</text>
<text x="1152.00" y="45" font-size="15.45" fill="#6b7280" stroke="#6b7280" stroke-width="0.7" text-anchor="middle" textLength="39.70" lengthAdjust="spacingAndGlyphs">Andy</text>
<text x="1361.50" y="28" font-size="15.45" fill="#6b7280" stroke="#6b7280" stroke-width="0.7" text-anchor="middle" textLength="115.20" lengthAdjust="spacingAndGlyphs">Shop: Business</text>
<text x="1361.50" y="45" font-size="15.45" fill="#6b7280" stroke="#6b7280" stroke-width="0.7" text-anchor="middle" textLength="37.20" lengthAdjust="spacingAndGlyphs">Mine</text>
<text x="951.70" y="36" font-size="14.18" fill="#ffffff" font-weight="700" text-anchor="middle">?</text>
<text x="25.58" y="103" font-size="18.9" fill="#1f2937" font-weight="700" textLength="95.14" lengthAdjust="spacingAndGlyphs">Mijn winkel</text>
<text x="25.38" y="367" font-size="18.9" fill="#1f2937" font-weight="700" textLength="81.74" lengthAdjust="spacingAndGlyphs">Repricers</text>
<text x="25.08" y="490" font-size="18.9" fill="#1f2937" font-weight="700" textLength="146.84" lengthAdjust="spacingAndGlyphs">Product research</text>
<text x="25.28" y="754" font-size="18.9" fill="#1f2937" font-weight="700" textLength="131.04" lengthAdjust="spacingAndGlyphs">Automatisering</text>
<text x="25.28" y="877" font-size="18.9" fill="#1f2937" font-weight="700" textLength="114.94" lengthAdjust="spacingAndGlyphs">Uitbreidingen</text>
<text x="25.58" y="1035" font-size="18.9" fill="#1f2937" font-weight="700" textLength="98.24" lengthAdjust="spacingAndGlyphs">Community</text>
<text x="73.56" y="142" font-size="16.8" fill="#111827" textLength="70.48" lengthAdjust="spacingAndGlyphs">Overzicht</text>
<text x="73.56" y="177" font-size="16.8" fill="#3b63e3" font-weight="700" textLength="72.08" lengthAdjust="spacingAndGlyphs">Analytics</text>
<text x="73.56" y="212" font-size="16.8" fill="#111827" textLength="75.28" lengthAdjust="spacingAndGlyphs">Producten</text>
<text x="73.56" y="247" font-size="16.8" fill="#111827" textLength="89.28" lengthAdjust="spacingAndGlyphs">Bestellingen</text>
<text x="73.56" y="283" font-size="16.8" fill="#111827" textLength="140.28" lengthAdjust="spacingAndGlyphs">Sponsored product</text>
<text x="73.56" y="318" font-size="16.8" fill="#111827" textLength="135.58" lengthAdjust="spacingAndGlyphs">Product content AI</text>
<text x="73.56" y="406" font-size="16.8" fill="#111827" textLength="130.28" lengthAdjust="spacingAndGlyphs">Koopblok repricer</text>
<text x="73.56" y="441" font-size="16.8" fill="#111827" textLength="143.48" lengthAdjust="spacingAndGlyphs">Eigen merk repricer</text>
<text x="73.56" y="529" font-size="16.8" fill="#111827" textLength="112.88" lengthAdjust="spacingAndGlyphs">Product tracker</text>
<text x="73.56" y="564" font-size="16.8" fill="#111827" textLength="129.08" lengthAdjust="spacingAndGlyphs">Product database</text>
<text x="73.56" y="599" font-size="16.8" fill="#111827" textLength="113.88" lengthAdjust="spacingAndGlyphs">Ranking tracker</text>
<text x="73.56" y="634" font-size="16.8" fill="#111827" textLength="89.28" lengthAdjust="spacingAndGlyphs">Zoekvolume</text>
<text x="73.56" y="670" font-size="16.8" fill="#111827" textLength="141.58" lengthAdjust="spacingAndGlyphs">Zoekterm database</text>
<text x="73.56" y="705" font-size="16.8" fill="#111827" textLength="112.88" lengthAdjust="spacingAndGlyphs">Winstcalculator</text>
<text x="73.56" y="793" font-size="16.8" fill="#111827" textLength="74.98" lengthAdjust="spacingAndGlyphs">Klantmails</text>
<text x="73.56" y="828" font-size="16.8" fill="#111827" textLength="92.68" lengthAdjust="spacingAndGlyphs">Advertenties</text>
<text x="73.56" y="916" font-size="16.8" fill="#111827" textLength="62.08" lengthAdjust="spacingAndGlyphs">Extensie</text>
<text x="73.56" y="951" font-size="16.8" fill="#111827" textLength="86.88" lengthAdjust="spacingAndGlyphs">Import-feed</text>
<text x="73.56" y="986" font-size="16.8" fill="#111827" textLength="46.78" lengthAdjust="spacingAndGlyphs">Zapier</text>
<text x="73.56" y="1074" font-size="16.8" fill="#111827" textLength="73.58" lengthAdjust="spacingAndGlyphs">Whatsapp</text>
<text x="73.56" y="1109" font-size="16.8" fill="#111827" textLength="99.28" lengthAdjust="spacingAndGlyphs">Refer a friend</text>
<text x="181.60" y="428" font-size="10.5" fill="#3f51b5" font-weight="700" textLength="33.80" lengthAdjust="spacingAndGlyphs">Nieuw</text>
<text x="293.94" y="134" font-size="35.7" fill="#1f2937" font-weight="700" textLength="279.72" lengthAdjust="spacingAndGlyphs">Analyseer je data</text>
<text x="321.36" y="231" font-size="16.8" fill="#4b5563" textLength="119.68" lengthAdjust="spacingAndGlyphs">Laatste 4 weken</text>
<text x="531.86" y="231" font-size="16.8" fill="#4b5563" textLength="66.58" lengthAdjust="spacingAndGlyphs">Dagelijks</text>
<text x="863.28" y="232" font-size="18.9" fill="#111827" font-weight="700" textLength="89.84" lengthAdjust="spacingAndGlyphs">Alle teams</text>
<text x="1273.36" y="231" font-size="16.8" fill="#8c929c" textLength="28.78" lengthAdjust="spacingAndGlyphs">Van</text>
<text x="1449.86" y="231" font-size="16.8" fill="#8c929c" textLength="23.78" lengthAdjust="spacingAndGlyphs">Tot</text>
<text x="294.12" y="306" font-size="23.1" fill="#1f2937" font-weight="700" textLength="104.46" lengthAdjust="spacingAndGlyphs">Overzicht</text>
<text x="294.12" y="1195" font-size="23.1" fill="#1f2937" font-weight="700" textLength="68.76" lengthAdjust="spacingAndGlyphs">Marge</text>
<text x="338.70" y="386" font-size="18.48" fill="#5d6673" textLength="130.01" lengthAdjust="spacingAndGlyphs">Omzet incl BTW</text>
<text x="338.16" y="429" font-size="27.3" fill="#1f2937" font-weight="700" textLength="150.68" lengthAdjust="spacingAndGlyphs">€10.964,90</text>
<text x="343.28" y="456" font-size="13.65" fill="#b4372c" font-weight="700" textLength="138.04" lengthAdjust="spacingAndGlyphs">- € 1.514,90 (-12,14%)</text>
<text x="550.90" y="386" font-size="18.48" fill="#5d6673" textLength="134.81" lengthAdjust="spacingAndGlyphs">Omzet excl BTW</text>
<text x="550.36" y="429" font-size="27.3" fill="#1f2937" font-weight="700" textLength="134.88" lengthAdjust="spacingAndGlyphs">€9.085,97</text>
<text x="555.48" y="456" font-size="13.65" fill="#b4372c" font-weight="700" textLength="144.34" lengthAdjust="spacingAndGlyphs">- € 1.262,23 (-12,20%)</text>
<text x="763.00" y="386" font-size="18.48" fill="#5d6673" textLength="56.21" lengthAdjust="spacingAndGlyphs">Kosten</text>
<text x="762.46" y="429" font-size="27.3" fill="#1f2937" font-weight="700" textLength="124.88" lengthAdjust="spacingAndGlyphs">€4.118,94</text>
<text x="767.58" y="456" font-size="13.65" fill="#4c9a4e" font-weight="700" textLength="132.24" lengthAdjust="spacingAndGlyphs">- € 697,27 (-14,48%)</text>
<text x="975.10" y="386" font-size="18.48" fill="#5d6673" textLength="73.81" lengthAdjust="spacingAndGlyphs">Retouren</text>
<text x="974.56" y="429" font-size="27.3" fill="#1f2937" font-weight="700" textLength="80.08" lengthAdjust="spacingAndGlyphs">€0,00</text>
<text x="979.68" y="456" font-size="13.65" fill="#4c9a4e" font-weight="700" textLength="54.14" lengthAdjust="spacingAndGlyphs">+ € 0,00</text>
<text x="1187.40" y="386" font-size="18.48" fill="#5d6673" textLength="86.71" lengthAdjust="spacingAndGlyphs">Brutowinst</text>
<text x="1186.86" y="429" font-size="27.3" fill="#1f2937" font-weight="700" textLength="136.48" lengthAdjust="spacingAndGlyphs">€6.845,95</text>
<text x="1191.98" y="456" font-size="13.65" fill="#b4372c" font-weight="700" textLength="128.94" lengthAdjust="spacingAndGlyphs">- € 817,63 (-10,67%)</text>
<text x="1399.30" y="386" font-size="18.48" fill="#5d6673" textLength="87.91" lengthAdjust="spacingAndGlyphs">Nettowinst</text>
<text x="1398.76" y="429" font-size="27.3" fill="#1f2937" font-weight="700" textLength="134.08" lengthAdjust="spacingAndGlyphs">€4.967,03</text>
<text x="1403.88" y="456" font-size="13.65" fill="#b4372c" font-weight="700" textLength="132.24" lengthAdjust="spacingAndGlyphs">- € 564,94 (-10,21%)</text>
<text x="338.70" y="546" font-size="18.48" fill="#5d6673" textLength="31.41" lengthAdjust="spacingAndGlyphs">Btw</text>
<text x="338.16" y="589" font-size="27.3" fill="#1f2937" font-weight="700" textLength="130.08" lengthAdjust="spacingAndGlyphs">€1.878,93</text>
<text x="550.90" y="546" font-size="18.48" fill="#5d6673" textLength="100.01" lengthAdjust="spacingAndGlyphs">Bestellingen</text>
<text x="550.36" y="589" font-size="27.3" fill="#1f2937" font-weight="700" textLength="53.58" lengthAdjust="spacingAndGlyphs">448</text>
<text x="555.48" y="616" font-size="13.65" fill="#b4372c" font-weight="700" textLength="89.54" lengthAdjust="spacingAndGlyphs">- 67 (-13,01%)</text>
<text x="763.00" y="546" font-size="18.48" fill="#5d6673" textLength="160.41" lengthAdjust="spacingAndGlyphs">Producten verkocht</text>
<text x="762.46" y="589" font-size="27.3" fill="#1f2937" font-weight="700" textLength="53.18" lengthAdjust="spacingAndGlyphs">493</text>
<text x="767.58" y="616" font-size="13.65" fill="#b4372c" font-weight="700" textLength="87.94" lengthAdjust="spacingAndGlyphs">- 34 (-6,45%)</text>
<text x="975.10" y="546" font-size="18.48" fill="#5d6673" textLength="73.81" lengthAdjust="spacingAndGlyphs">Retouren</text>
<text x="974.56" y="589" font-size="27.3" fill="#1f2937" font-weight="700" textLength="33.38" lengthAdjust="spacingAndGlyphs">55</text>
<text x="979.68" y="616" font-size="13.65" fill="#4c9a4e" font-weight="700" textLength="92.74" lengthAdjust="spacingAndGlyphs">- 25 (-31,25%)</text>
<text x="1187.40" y="546" font-size="18.48" fill="#5d6673" textLength="94.41" lengthAdjust="spacingAndGlyphs">Retouren %</text>
<text x="1186.86" y="589" font-size="27.3" fill="#1f2937" font-weight="700" textLength="98.68" lengthAdjust="spacingAndGlyphs">10,04%</text>
<text x="1191.98" y="616" font-size="13.65" fill="#4c9a4e" font-weight="700" textLength="55.74" lengthAdjust="spacingAndGlyphs">-23,82%</text>
<text x="339.00" y="780" font-size="18.48" fill="#374151" font-weight="700" textLength="143.61" lengthAdjust="spacingAndGlyphs">Winkelprestaties</text>
<text x="989.30" y="780" font-size="18.48" fill="#374151" font-weight="700" textLength="314.41" lengthAdjust="spacingAndGlyphs">Verkochte producten in deze periode</text>
<text x="339.40" y="1272" font-size="15.75" fill="#374151" font-weight="700" textLength="92.20" lengthAdjust="spacingAndGlyphs">Bruto marge</text>
<text x="917.60" y="1272" font-size="15.75" fill="#374151" font-weight="700" text-anchor="end" textLength="111.20" lengthAdjust="spacingAndGlyphs">Vorige Periode</text>
<text x="974.40" y="1272" font-size="15.75" fill="#374151" font-weight="700" textLength="111.20" lengthAdjust="spacingAndGlyphs">Bruto marge %</text>
<text x="1558.60" y="1272" font-size="15.75" fill="#374151" font-weight="700" text-anchor="end" textLength="111.20" lengthAdjust="spacingAndGlyphs">Vorige Periode</text>
</svg>
</div>
</div>
</body></html>
